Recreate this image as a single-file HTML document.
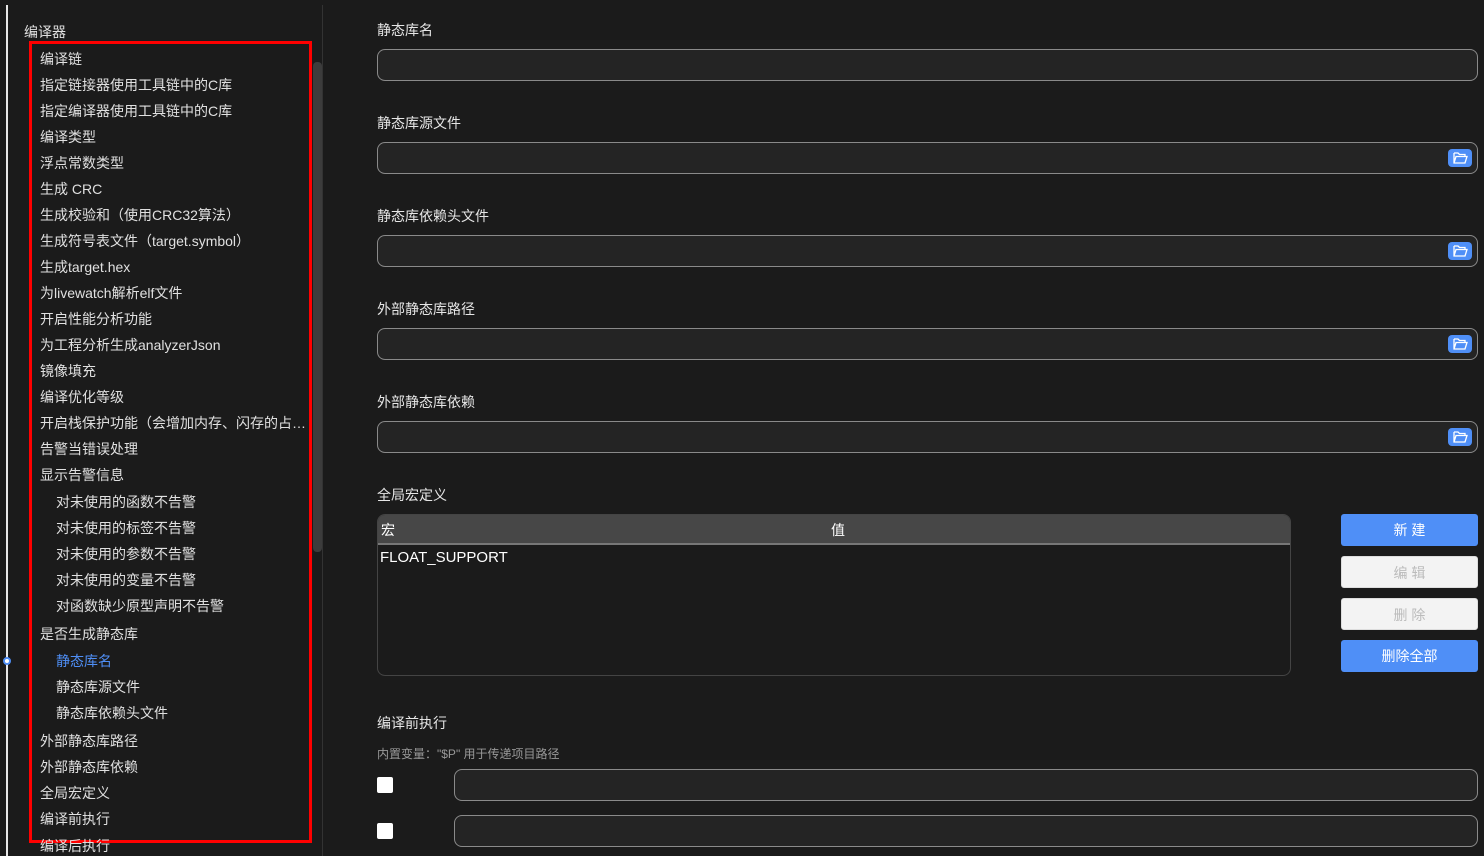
<!DOCTYPE html>
<html><head><meta charset="utf-8"><style>
*{margin:0;padding:0;box-sizing:border-box}
body{width:1484px;height:856px;background:#1b1b1b;overflow:hidden;position:relative;font-family:"Liberation Sans","Noto Sans CJK SC",sans-serif;color:#e6e6e6;font-size:14px}
.a{position:absolute;white-space:nowrap}
.it{position:absolute;line-height:20px;white-space:nowrap;color:#e0e0e0;font-size:14px}
.lbl{position:absolute;left:377px;font-size:14px;color:#e6e6e6;line-height:20px}
.inp{position:absolute;left:377px;width:1101px;height:32px;border:1px solid #8a8a8a;border-radius:8px;background:#242424}
.fb{position:absolute;right:5px;top:6px;width:24px;height:18px;background:#4f8ff7;border-radius:4px}
.btn{position:absolute;left:1341px;width:137px;height:32px;border-radius:3px;text-align:center;line-height:32px;font-size:14px}
.blue{background:#4f8ff7;color:#fff}
.gr{background:#f3f3f3;color:#bbb;border:1px solid #ddd}
.cb{position:absolute;left:377px;width:16px;height:16px;background:#fff;border-radius:2px}
</style></head><body>
<div class="a" style="left:6px;top:5px;width:2px;height:851px;background:#e8e8e8"></div>
<div class="a" style="left:3px;top:657px;width:8px;height:8px;border-radius:50%;background:#fff;border:2px solid #4f8ff7"></div>
<div class="a" style="left:322px;top:5px;width:1px;height:851px;background:#333"></div>
<div class="a" style="left:313px;top:62px;width:9px;height:490px;background:#3c3c3c;border-radius:4px"></div>
<div class="it" style="left:24px;top:22px">编译器</div>
<div class="a" style="left:29px;top:41px;width:283px;height:802px;border:3px solid #f00"></div>
<div class="it" style="left:40px;top:49px">编译链</div>
<div class="it" style="left:40px;top:75px">指定链接器使用工具链中的C库</div>
<div class="it" style="left:40px;top:101px">指定编译器使用工具链中的C库</div>
<div class="it" style="left:40px;top:127px">编译类型</div>
<div class="it" style="left:40px;top:153px">浮点常数类型</div>
<div class="it" style="left:40px;top:179px">生成 CRC</div>
<div class="it" style="left:40px;top:205px">生成校验和（使用CRC32算法）</div>
<div class="it" style="left:40px;top:231px">生成符号表文件（target.symbol）</div>
<div class="it" style="left:40px;top:257px">生成target.hex</div>
<div class="it" style="left:40px;top:283px">为livewatch解析elf文件</div>
<div class="it" style="left:40px;top:309px">开启性能分析功能</div>
<div class="it" style="left:40px;top:335px">为工程分析生成analyzerJson</div>
<div class="it" style="left:40px;top:361px">镜像填充</div>
<div class="it" style="left:40px;top:387px">编译优化等级</div>
<div class="it" style="left:40px;top:413px">开启栈保护功能（会增加内存、闪存的占…</div>
<div class="it" style="left:40px;top:439px">告警当错误处理</div>
<div class="it" style="left:40px;top:465px">显示告警信息</div>
<div class="it" style="left:56px;top:492px">对未使用的函数不告警</div>
<div class="it" style="left:56px;top:518px">对未使用的标签不告警</div>
<div class="it" style="left:56px;top:544px">对未使用的参数不告警</div>
<div class="it" style="left:56px;top:570px">对未使用的变量不告警</div>
<div class="it" style="left:56px;top:596px">对函数缺少原型声明不告警</div>
<div class="it" style="left:40px;top:624px">是否生成静态库</div>
<div class="it" style="left:56px;top:651px;color:#4f8ff7">静态库名</div>
<div class="it" style="left:56px;top:677px">静态库源文件</div>
<div class="it" style="left:56px;top:703px">静态库依赖头文件</div>
<div class="it" style="left:40px;top:731px">外部静态库路径</div>
<div class="it" style="left:40px;top:757px">外部静态库依赖</div>
<div class="it" style="left:40px;top:783px">全局宏定义</div>
<div class="it" style="left:40px;top:809px">编译前执行</div>
<div class="it" style="left:40px;top:836px">编译后执行</div>

<div class="lbl" style="top:20px">静态库名</div>
<div class="inp" style="top:49px"></div>
<div class="lbl" style="top:113px">静态库源文件</div>
<div class="inp" style="top:142px"><div class="fb"><svg width="24" height="18" viewBox="0 0 24 18"><path d="M6 4h4l1.5 1.5H17v2M6 4v10h11l2-6.5H8L6 14" fill="none" stroke="#fff" stroke-width="1.3"/></svg></div></div>
<div class="lbl" style="top:206px">静态库依赖头文件</div>
<div class="inp" style="top:235px"><div class="fb"><svg width="24" height="18" viewBox="0 0 24 18"><path d="M6 4h4l1.5 1.5H17v2M6 4v10h11l2-6.5H8L6 14" fill="none" stroke="#fff" stroke-width="1.3"/></svg></div></div>
<div class="lbl" style="top:299px">外部静态库路径</div>
<div class="inp" style="top:328px"><div class="fb"><svg width="24" height="18" viewBox="0 0 24 18"><path d="M6 4h4l1.5 1.5H17v2M6 4v10h11l2-6.5H8L6 14" fill="none" stroke="#fff" stroke-width="1.3"/></svg></div></div>
<div class="lbl" style="top:392px">外部静态库依赖</div>
<div class="inp" style="top:421px"><div class="fb"><svg width="24" height="18" viewBox="0 0 24 18"><path d="M6 4h4l1.5 1.5H17v2M6 4v10h11l2-6.5H8L6 14" fill="none" stroke="#fff" stroke-width="1.3"/></svg></div></div>
<div class="lbl" style="top:485px">全局宏定义</div>
<div class="a" style="left:377px;top:514px;width:914px;height:162px;border:1px solid #444;border-radius:8px;overflow:hidden">
 <div style="height:30px;background:#474747;border-bottom:2px solid #777;position:relative">
  <span class="a" style="left:3px;top:5px;color:#fff">宏</span>
  <span class="a" style="left:453px;top:5px;color:#fff">值</span>
 </div>
 <div class="a" style="left:2px;top:34px;color:#fff;font-size:15px">FLOAT_SUPPORT</div>
</div>
<div class="btn blue" style="top:514px">新 建</div>
<div class="btn gr" style="top:556px">编 辑</div>
<div class="btn gr" style="top:598px">删 除</div>
<div class="btn blue" style="top:640px">删除全部</div>
<div class="lbl" style="top:713px">编译前执行</div>
<div class="a" style="left:377px;top:745px;font-size:12px;color:#999">内置变量："$P" 用于传递项目路径</div>
<div class="cb" style="top:777px"></div>
<div class="inp" style="left:454px;width:1024px;top:769px"></div>
<div class="cb" style="top:823px"></div>
<div class="inp" style="left:454px;width:1024px;top:815px"></div>
</body></html>
